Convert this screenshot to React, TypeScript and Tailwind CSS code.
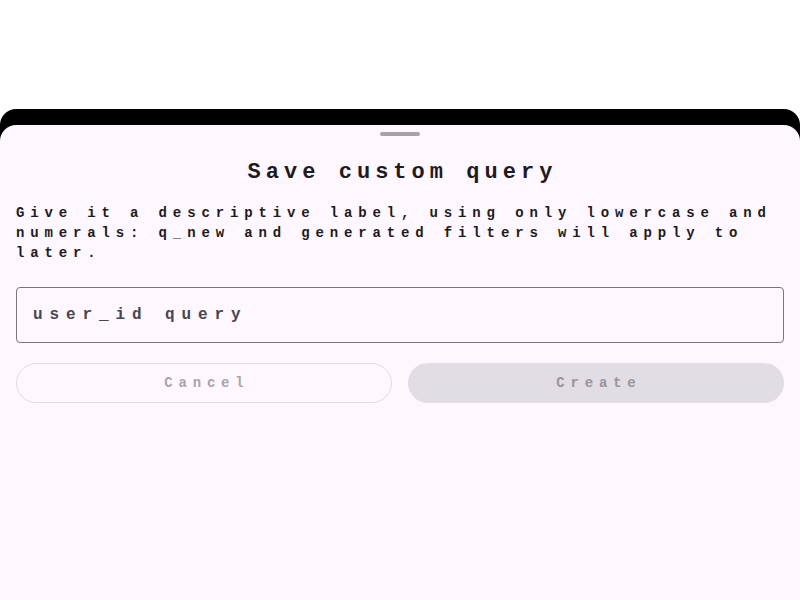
export default function App() {
  return (
    <div className="h-[600px] w-full bg-white flex flex-col pt-[109px] font-['Liberation_Mono','DejaVu_Sans_Mono',monospace]">
      {/* dark band behind the sheet */}
      <div className="flex-1 bg-black rounded-t-2xl pt-4 flex flex-col">
        {/* Sheet */}
        <div className="flex-1 bg-[#fef7ff] rounded-t-2xl flex flex-col items-stretch px-4">
          <div className="mt-[7px] mx-auto w-10 h-1 rounded-full bg-[#a7a2aa]" />

          <h2 className="mt-[23px] text-center text-[22px] leading-7 font-bold tracking-[5.04px] pl-[5px] text-[#1d1b20]">
            Save custom query
          </h2>

          <p className="mt-4 text-[14px] leading-5 font-bold tracking-[5.86px] text-[#1d1b20]">
            Give it a descriptive label, using only lowercase and numerals: q_new and generated filters will apply to later.
          </p>

          <div className="mt-6 h-14 border border-[#79747e] rounded flex items-center px-4">
            <span className="text-[16px] font-bold tracking-[6.9px] text-[#49454f]">user_id query</span>
          </div>

          <div className="mt-5 grid grid-cols-2 gap-4">
            <button className="h-10 rounded-full border border-[#e1dce3] flex items-center justify-center text-[14px] font-bold tracking-[5.8px] pl-[5.8px] text-[#a8a4ab]">
              Cancel
            </button>
            <button className="h-10 rounded-full bg-[#e2dde4] flex items-center justify-center text-[14px] font-bold tracking-[5.8px] pl-[5.8px] text-[#99949c]">
              Create
            </button>
          </div>
        </div>
      </div>
    </div>
  );
}
